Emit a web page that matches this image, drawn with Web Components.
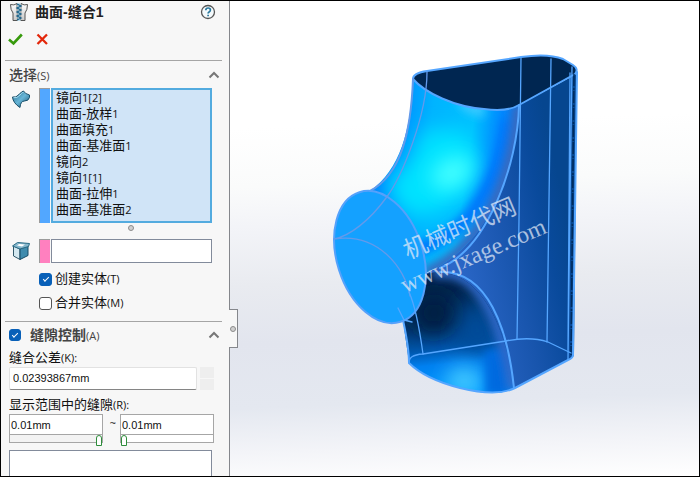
<!DOCTYPE html>
<html lang="zh-CN">
<head>
<meta charset="utf-8">
<title>曲面-缝合1</title>
<style>
  body { margin: 0; font-family: "Liberation Sans", "Noto Sans CJK SC", sans-serif; font-size: 13px; color: #111; background: #000; text-autospace: no-autospace; }
</style>
</head>
<body>
<cad-window>
  <property-panel slot="panel">
    <panel-header>曲面-缝合1</panel-header>
    <panel-section>
      <span slot="title">选择<key-hint>(S)</key-hint></span>
      <selection-row kind="surface" label="要缝合的曲面">
        <list-item>镜向<key-hint>1[2]</key-hint></list-item>
        <list-item>曲面-放样<key-hint>1</key-hint></list-item>
        <list-item>曲面填充<key-hint>1</key-hint></list-item>
        <list-item>曲面-基准面<key-hint>1</key-hint></list-item>
        <list-item>镜向<key-hint>2</key-hint></list-item>
        <list-item>镜向<key-hint>1[1]</key-hint></list-item>
        <list-item>曲面-拉伸<key-hint>1</key-hint></list-item>
        <list-item>曲面-基准面<key-hint>2</key-hint></list-item>
      </selection-row>
      <selection-row kind="face" label="种子面"></selection-row>
      <check-option checked>创建实体<key-hint>(T)</key-hint></check-option>
      <check-option>合并实体<key-hint>(M)</key-hint></check-option>
    </panel-section>
    <panel-section checkable>
      <span slot="title">缝隙控制<key-hint>(A)</key-hint></span>
      <tolerance-field value="0.02393867mm">缝合公差<key-hint>(K):</key-hint></tolerance-field>
      <gap-range low="0.01mm" high="0.01mm">显示范围中的缝隙<key-hint>(R):</key-hint></gap-range>
      <gap-list></gap-list>
    </panel-section>
  </property-panel>
  <model-view slot="view"></model-view>
</cad-window>

<script>
const define = (name, html, setup) => {
  const template = document.createElement('template');
  template.innerHTML = html.trim();
  customElements.define(name, class extends HTMLElement {
    constructor() {
      super();
      this.attachShadow({ mode: 'open' }).append(template.content.cloneNode(true));
    }
    connectedCallback() { if (setup) setup(this, this.shadowRoot); }
  });
};

define('key-hint', `
<style>:host { display: inline; font-family: "Open Sans", "Noto Sans", sans-serif; font-size: 11px; line-height: 1; font-weight: 500; }</style><slot></slot>`);

define('cad-window', `
<style>
  :host { display: grid; grid-template-columns: 229px minmax(0, 1fr); height: 100vh; box-sizing: border-box; border: 1px solid #000; overflow: hidden; background: #fff; }
  ::slotted(*) { min-height: 0; }
</style>
<slot name="panel"></slot><slot name="view"></slot>`);

define('property-panel', `
<style>
  :host { display: flex; flex-direction: column; position: relative; box-sizing: border-box; background: #f7f7f7; border-right: 1px solid #85878c; z-index: 1; padding: 0 7px 0 4px; }
  button { position: absolute; right: -9px; top: 308px; width: 9px; height: 39px; box-sizing: border-box; padding: 0; border: 1px solid #85878c; border-left: 0; background: #f7f7f7; display: grid; place-items: center; }
  i { width: 4px; height: 4px; border: 1px solid #8b8b8b; border-radius: 50%; background: #d0d0d0; }
  ::slotted(panel-section:last-of-type) { flex: 1; min-height: 0; }
</style>
<slot></slot><button aria-label="折叠面板"><i></i></button>`);

define('panel-header', `
<style>
  :host { display: block; height: 59px; }
  .title { display: flex; align-items: center; height: 22px; padding: 0 6px 0 4px; }
  h1 { flex: 1; margin: 0 0 0 6px; font-size: 14px; line-height: 20px; font-weight: 700; color: #222; }
  button { border: 0; padding: 0; background: none; display: block; }
  svg { display: block; }
  .acts { display: flex; gap: 13px; padding: 8px 0 0 3px; }
</style>
<div class="title">
  <svg width="20" height="20" viewBox="0 0 20 20"><defs><linearGradient id="m" x2="0" y2="1"><stop stop-color="#fff"/><stop offset="1" stop-color="#c9c9c9"/></linearGradient></defs>
    <path d="M1.500 2.500 Q5 3.800 8 1.500 L8.500 18.500 H4 V11 Q1.500 8 1.500 2.500Z M18.500 2.500 Q15 3.800 12 1.500 L11.500 18.500 H16 V11 Q18.500 8 18.500 2.500Z" fill="url(#m)" stroke="#555"/>
    <path d="M10 1V19" stroke="#c2e0ed" stroke-width="3"/><path d="M8 2l4 2-4 2 4 2-4 2 4 2-4 2 4 2-4 2" fill="none" stroke="#1d6289" stroke-width="1.300"/></svg>
  <h1><slot></slot></h1>
  <button aria-label="帮助"><svg width="16" height="16" viewBox="0 0 16 16"><circle cx="8" cy="8" r="6.500" fill="#f5fafc" stroke="#555" stroke-width="1.300"/><path d="M5.800 6.200Q5.800 4 8.100 4 10.400 4 10.400 6 10.400 7.200 9.100 7.900 8.100 8.500 8.100 9.600M8.100 10.700V12.300" fill="none" stroke="#28779c" stroke-width="1.700"/></svg></button>
</div>
<div class="acts">
  <button aria-label="确定"><svg width="15" height="16" viewBox="0 0 15 16"><path d="M1 8.500 5.500 12.500 13.800 3.500" fill="none" stroke="#379a0c" stroke-width="2.600"/></svg></button>
  <button aria-label="取消"><svg width="14" height="16" viewBox="0 0 14 16"><path d="M1.500 3.500 11 13M11 3.500 1.500 13" stroke="#e3270b" stroke-width="2.300"/></svg></button>
</div>`);

define('panel-section', `
<style>
  :host { display: flex; flex-direction: column; border-top: 1px solid #a5a5a5; padding-bottom: 6px; }
  :host([checkable]) { padding-bottom: 0; }
  header { display: flex; align-items: center; height: 27px; flex: none; padding: 0 2px 0 4px; gap: 9px; }
  h2 { flex: 1; margin: 0; font-size: 14px; line-height: 20px; font-weight: 500; color: #444; }
  .checkable h2 { font-weight: 700; }
  .checkable { height: 26px; }
  .toggle { padding: 0; border: 0; background: none; display: block; }
  svg { display: block; }
</style>
<header></header><slot></slot>`,
(host, root) => {
  const checkable = host.hasAttribute('checkable');
  const header = root.querySelector('header');
  header.className = checkable ? 'checkable' : '';
  header.innerHTML = (checkable ? '<tick-box checked label="缝隙控制"></tick-box>' : '') +
    '<h2><slot name="title"></slot></h2><button class="toggle" aria-label="折叠"><svg width="12" height="10" viewBox="0 0 12 10"><path d="M1.500 7.500 6 3 10.500 7.500" fill="none" stroke="#777" stroke-width="2"/></svg></button>';
});

const boxStyle = `
  input[type=checkbox] { appearance: none; display: grid; place-items: center; flex: none; margin: 0; width: 12px; height: 12px; box-sizing: border-box; border: 1px solid #555; border-radius: 3px; background: #fff; }
  input[type=checkbox]:checked { background: #0860b8; border-color: #0860b8; }
  input[type=checkbox]:checked::before { content: ""; width: 5px; height: 2px; border: solid #fff; border-width: 0 0 1px 1px; transform: translateY(-1px) rotate(-45deg); }`;

define('tick-box', `<style>:host { display: block; } ${boxStyle}</style><input type="checkbox">`, (host, root) => {
  const input = root.querySelector('input');
  input.checked = host.hasAttribute('checked');
  input.setAttribute('aria-label', host.getAttribute('label'));
});

define('check-option', `
<style>:host { display: block; padding-left: 34px; height: 24px; } ${boxStyle}
  label { display: flex; align-items: center; gap: 3px; height: 24px; line-height: 20px; }
  label input[type=checkbox] { width: 13px; height: 13px; }
</style>
<label><input type="checkbox"><span><slot></slot></span></label>`, (host, root) => {
  root.querySelector('input').checked = host.hasAttribute('checked');
});

define('list-item', `
<style>:host { display: block; height: 16px; line-height: 16px; white-space: nowrap; }</style><slot></slot>`, host => host.setAttribute('role', 'option'));

define('selection-row', `
<style>
  :host { display: grid; grid-template-columns: 28px 11px minmax(0, 1fr); column-gap: 0; padding: 0 10px 0 6px; }
  .bar { box-sizing: border-box; border: 1px solid #9b9b9b; border-width: 1px 0 0 1px; background: #52a7ff; }
  .list { margin-left: 1px; box-sizing: border-box; height: 135px; padding: 0 3px; border: 2px solid #53abdf; background: #d0e4f7; }
  svg { display: block; }
  .grip { grid-column: 3; width: 4px; height: 4px; margin: 2px auto 8px; border: 1px solid #8b8b8b; border-radius: 50%; background: #d0d0d0; }
  :host([kind=face]) .bar { background: #ff80bf; }
  :host([kind=face]) .list { height: 24px; border: 1px solid #828b9b; background: #fff; }
  :host([kind=face]) { padding-bottom: 4px; }
  :host([kind=face]) .grip, :host([kind=face]) .surface, :host([kind=surface]) .face { display: none; }
</style>
<div>
  <svg class="surface" width="20" height="22" viewBox="0 0 20 22"><defs><linearGradient id="s" x2="1" y2="1"><stop stop-color="#286a89"/><stop offset=".5" stop-color="#66b5d7"/><stop offset="1" stop-color="#164c68"/></linearGradient></defs><path d="M1.500 9Q5 10 8 6.500T12.500 3Q14 6 18.500 7V9.500Q17.500 13 13.500 13T9 19.500Q2 15 1.500 9Z" fill="url(#s)" stroke="#174e69"/><path d="M2.500 9.800Q6 10.500 9 7T12.500 4.500" fill="none" stroke="#a5ddf2"/></svg>
  <svg class="face" width="20" height="22" viewBox="0 0 20 22"><path d="M2.500 7 9 10V20.500L2.500 17Z" fill="#d4e8f0" stroke="#32586a"/><path d="M9 10 17 7V16.500L9 20.500Z" fill="#3f8bad" stroke="#174b65"/><path d="M1.500 7 6.500 3.500 18.500 4.500 17.500 7.500 9 10Z" fill="#86b7cc" stroke="#286984"/><path d="M6 6.500 8 5 14 5.500 11 7.500Z" fill="#fff"/></svg>
</div>
<div class="bar"></div>
<div class="list" role="listbox" tabindex="0"><slot></slot></div>
<div class="grip"></div>`, (host, root) => {
  root.querySelector('.list').setAttribute('aria-label', host.getAttribute('label'));
});

const fieldStyle = `
  input[type=text] { display: block; width: 100%; min-width: 0; box-sizing: border-box; margin: 0; font-family: "Liberation Sans", sans-serif; font-size: 11px; line-height: 14px; color: #111; background: #fff; outline: 0; border-radius: 0; }
  label { display: block; line-height: 20px; height: 19px; }`;

define('tolerance-field', `
<style>:host { display: block; padding: 0 8px 0 4px; } ${fieldStyle}
  .row { display: flex; gap: 3px; }
  input[type=text] { flex: 1; height: 23px; padding: 0 3px 2px; border: 1px solid #e2e2e2; border-bottom-color: #858585; border-radius: 2px; }
  .spin { display: grid; gap: 1px; width: 14px; }
  button { border: 0; padding: 0; background: #eee; }
</style>
<label for="v"><slot></slot></label>
<div class="row"><input id="v" type="text"><div class="spin"><button aria-label="增加"></button><button aria-label="减少"></button></div></div>`,
(host, root) => { root.querySelector('#v').value = host.getAttribute('value'); });

define('gap-range', `
<style>:host { display: block; padding: 5px 8px 0 4px; } ${fieldStyle}
  label { height: 19px; }
  .row { display: grid; grid-template-columns: minmax(0, 1fr) 17px minmax(0, 1fr); }
  .row > span { text-align: center; line-height: 17px; font-family: "Open Sans", sans-serif; font-size: 11px; padding-left: 3px; }
  input[type=text] { height: 21px; padding: 0 1px; border: 1px solid #a6a6a6; }
  input[type=range] { appearance: none; display: block; width: 100%; height: 12px; margin: -1px 0 0; background: none; }
  input[type=range]::-webkit-slider-runnable-track { height: 9px; margin-bottom: 3px; box-sizing: border-box; border: 1px solid #a6a6a6; background: #fff; }
  .low input[type=range]::-webkit-slider-runnable-track { background: #f3f3f3; }
  input[type=range]::-webkit-slider-thumb { appearance: none; box-sizing: border-box; width: 6px; height: 11px; border: 1px solid #2e8d3b; border-radius: 3px 3px 0 0; background: #fff; }
</style>
<label for="low"><slot></slot></label>
<div class="row">
  <div class="low"><input id="low" type="text"><input type="range" value="100" aria-label="最小缝隙"></div>
  <span>~</span>
  <div><input id="high" type="text" aria-label="最大缝隙"><input type="range" value="0" aria-label="最大缝隙范围"></div>
</div>`, (host, root) => {
  root.querySelector('#low').value = host.getAttribute('low');
  root.querySelector('#high').value = host.getAttribute('high');
});

define('gap-list', `
<style>:host { display: block; flex: 1; min-height: 24px; margin: 4px 10px 0 4px; border: 1px solid #828b9b; border-bottom: 0; background: #fff; }</style>`);

define('model-view', `
<style>
  :host { display: block; overflow: hidden; background: linear-gradient(178deg, #fff 26%, #fafbfb 38%, #f3f4f8 46%, #e9ebf0 58%, #e2e5ee 70%, #e4e8f0 83%, #f3f4f8 92%, #fff 100%); }
  svg { display: block; width: 100%; height: 100%; }
  .e { fill: none; stroke: #55a6ff; stroke-width: 2; stroke-linejoin: round; stroke-linecap: round; }
  .t { stroke-width: 1.300; }
  .v { stroke: #639aeb; }
  .w { fill: #e5ecf7; fill-opacity: .72; }
</style>
<svg viewBox="230 1 469 475" role="img" aria-label="曲面模型">
  <defs>
    <linearGradient id="face" gradientUnits="userSpaceOnUse" x1="455" y1="265" x2="572" y2="240"><stop stop-color="#2b67c8"/><stop offset=".5" stop-color="#1855ad"/><stop offset=".8" stop-color="#094a9c"/><stop offset="1" stop-color="#06468f"/></linearGradient>
    <linearGradient id="up" gradientUnits="userSpaceOnUse" x1="388" y1="130" x2="525" y2="150"><stop stop-color="#0088ff"/><stop offset=".3" stop-color="#00b4ff"/><stop offset=".6" stop-color="#00c0ff"/><stop offset=".8" stop-color="#0088ff"/><stop offset="1" stop-color="#0072f0"/></linearGradient>
    <linearGradient id="low" gradientUnits="userSpaceOnUse" x1="430" y1="290" x2="440" y2="390"><stop stop-color="#00244b"/><stop offset=".35" stop-color="#003568"/><stop offset=".6" stop-color="#0058b0"/><stop offset=".75" stop-color="#0080f0"/><stop offset="1" stop-color="#0098ff"/></linearGradient>
    <clipPath id="cu"><path d="M413 79C425 94 460 110 494 110Q510 110 519 105C518 165 491 245 426 273L370 191C400 170 411 130 413 79Z"/></clipPath>
    <clipPath id="cl"><path d="M426 274C480 262 507 330 514 388Q497 398 460 388 425 379 409 363L403 320Z"/></clipPath>
    <filter id="b" x="-60%" y="-60%" width="220%" height="220%"><feGaussianBlur stdDeviation="10"/></filter>
    <filter id="c" x="-60%" y="-60%" width="220%" height="220%"><feGaussianBlur stdDeviation="4"/></filter>
  </defs>
  <path d="M519 105 571 77 577 71 574 355Q573 358 568 360L514 388 480 320 426 274C500 230 515 165 519 105Z" fill="url(#face)"/>
  <g clip-path="url(#cu)">
    <rect x="360" y="70" width="170" height="210" fill="url(#up)"/>
    <path d="M425 130 465 130 478 160 462 195 435 215 405 215 385 185 410 160Z" fill="#00e2ff" filter="url(#b)"/>
    <ellipse cx="452" cy="173" rx="22" ry="15" fill="#44ffff" filter="url(#b)" transform="rotate(-30 452 173)"/>
    <path d="M455 100H484V118L465 112Z" fill="#38c8ff" filter="url(#c)"/>
    <path d="M508 120C502 180 470 235 415 250" fill="none" stroke="#0078fb" stroke-width="13" filter="url(#c)"/>
    <path d="M519 105C516 165 491 246 426 274" fill="none" stroke="#386bc0" stroke-width="14" filter="url(#c)"/>
  </g>
  <g clip-path="url(#cl)">
    <rect x="395" y="260" width="125" height="140" fill="url(#low)"/>
    <ellipse cx="434" cy="313" rx="21" ry="20" fill="#001f42" filter="url(#b)"/>
    <path d="M466 300 490 310 500 350 480 352 455 345Z" fill="#004c9a" filter="url(#b)"/>
    <ellipse cx="464" cy="381" rx="18" ry="14" fill="#46ccff" filter="url(#b)"/>
    <path d="M485 350H510V396H485Z" fill="#006be0" filter="url(#c)"/>
    <path d="M433 273C480 263 504 325 513 390" fill="none" stroke="#2d67c8" stroke-width="12" filter="url(#c)"/>
  </g>
  <path d="M413 79Q413 73 427 71L521 57Q548 53 563 59L573 65Q579 69 575 74L519 105Q508 112 484 109C455 107 425 93 413 79Z" fill="#002651"/>
  <path class="e" d="M413 79Q413 73 427 71L521 57Q548 53 563 59L573 65Q579 69 575 74L519 105Q508 112 484 109C455 107 425 93 413 79Z"/>
  <path class="e v" d="M413 79C411 130 402 174 370 191"/>
  <path class="e" d="M577 72 573 355Q573 358 568 360L515 388Q497 397 460 388 425 379 409 363 409 348 403 320"/>
  <path d="M574 74 571 355" stroke="#002b5c" stroke-width="1.500" stroke-dasharray="12 2 2 1"/>
  <path class="e t" d="M521 57 519 220 517 339M551 59 549 200 547 342M572 67 570 200 568 359M570 73 568 350"/>
  <path class="e" d="M519 105C518 165 487 249 440 268"/>
  <path class="e" d="M440 272C488 270 508 330 514 388"/>
  <path class="e t" d="M409 363Q408 355 423 354L506 341Q530 336 548 342L571 353"/>
  <ellipse cx="380" cy="257" rx="43" ry="68" transform="rotate(-17.600 380 257)" fill="#14a1ff" stroke="#55a1fb" stroke-width="2"/>
  <path class="e t v" d="M427 72C427 115 402 177 386 198 370 220 350 236 334 239C377 232 405 267 410 296"/>
  <path class="e t" d="M409 292Q417 310 423 354M398 308 404 320 412 322"/>
  <g transform="rotate(-23 412 262)" class="w">
    <text x="409" y="258" font-size="24" font-family="Noto Sans CJK SC, sans-serif">机械时代网</text>
    <text x="393" y="288" font-size="24" font-family="Liberation Serif, serif">www.jxage.com</text>
  </g>
</svg>`);
</script>
</body>
</html>
